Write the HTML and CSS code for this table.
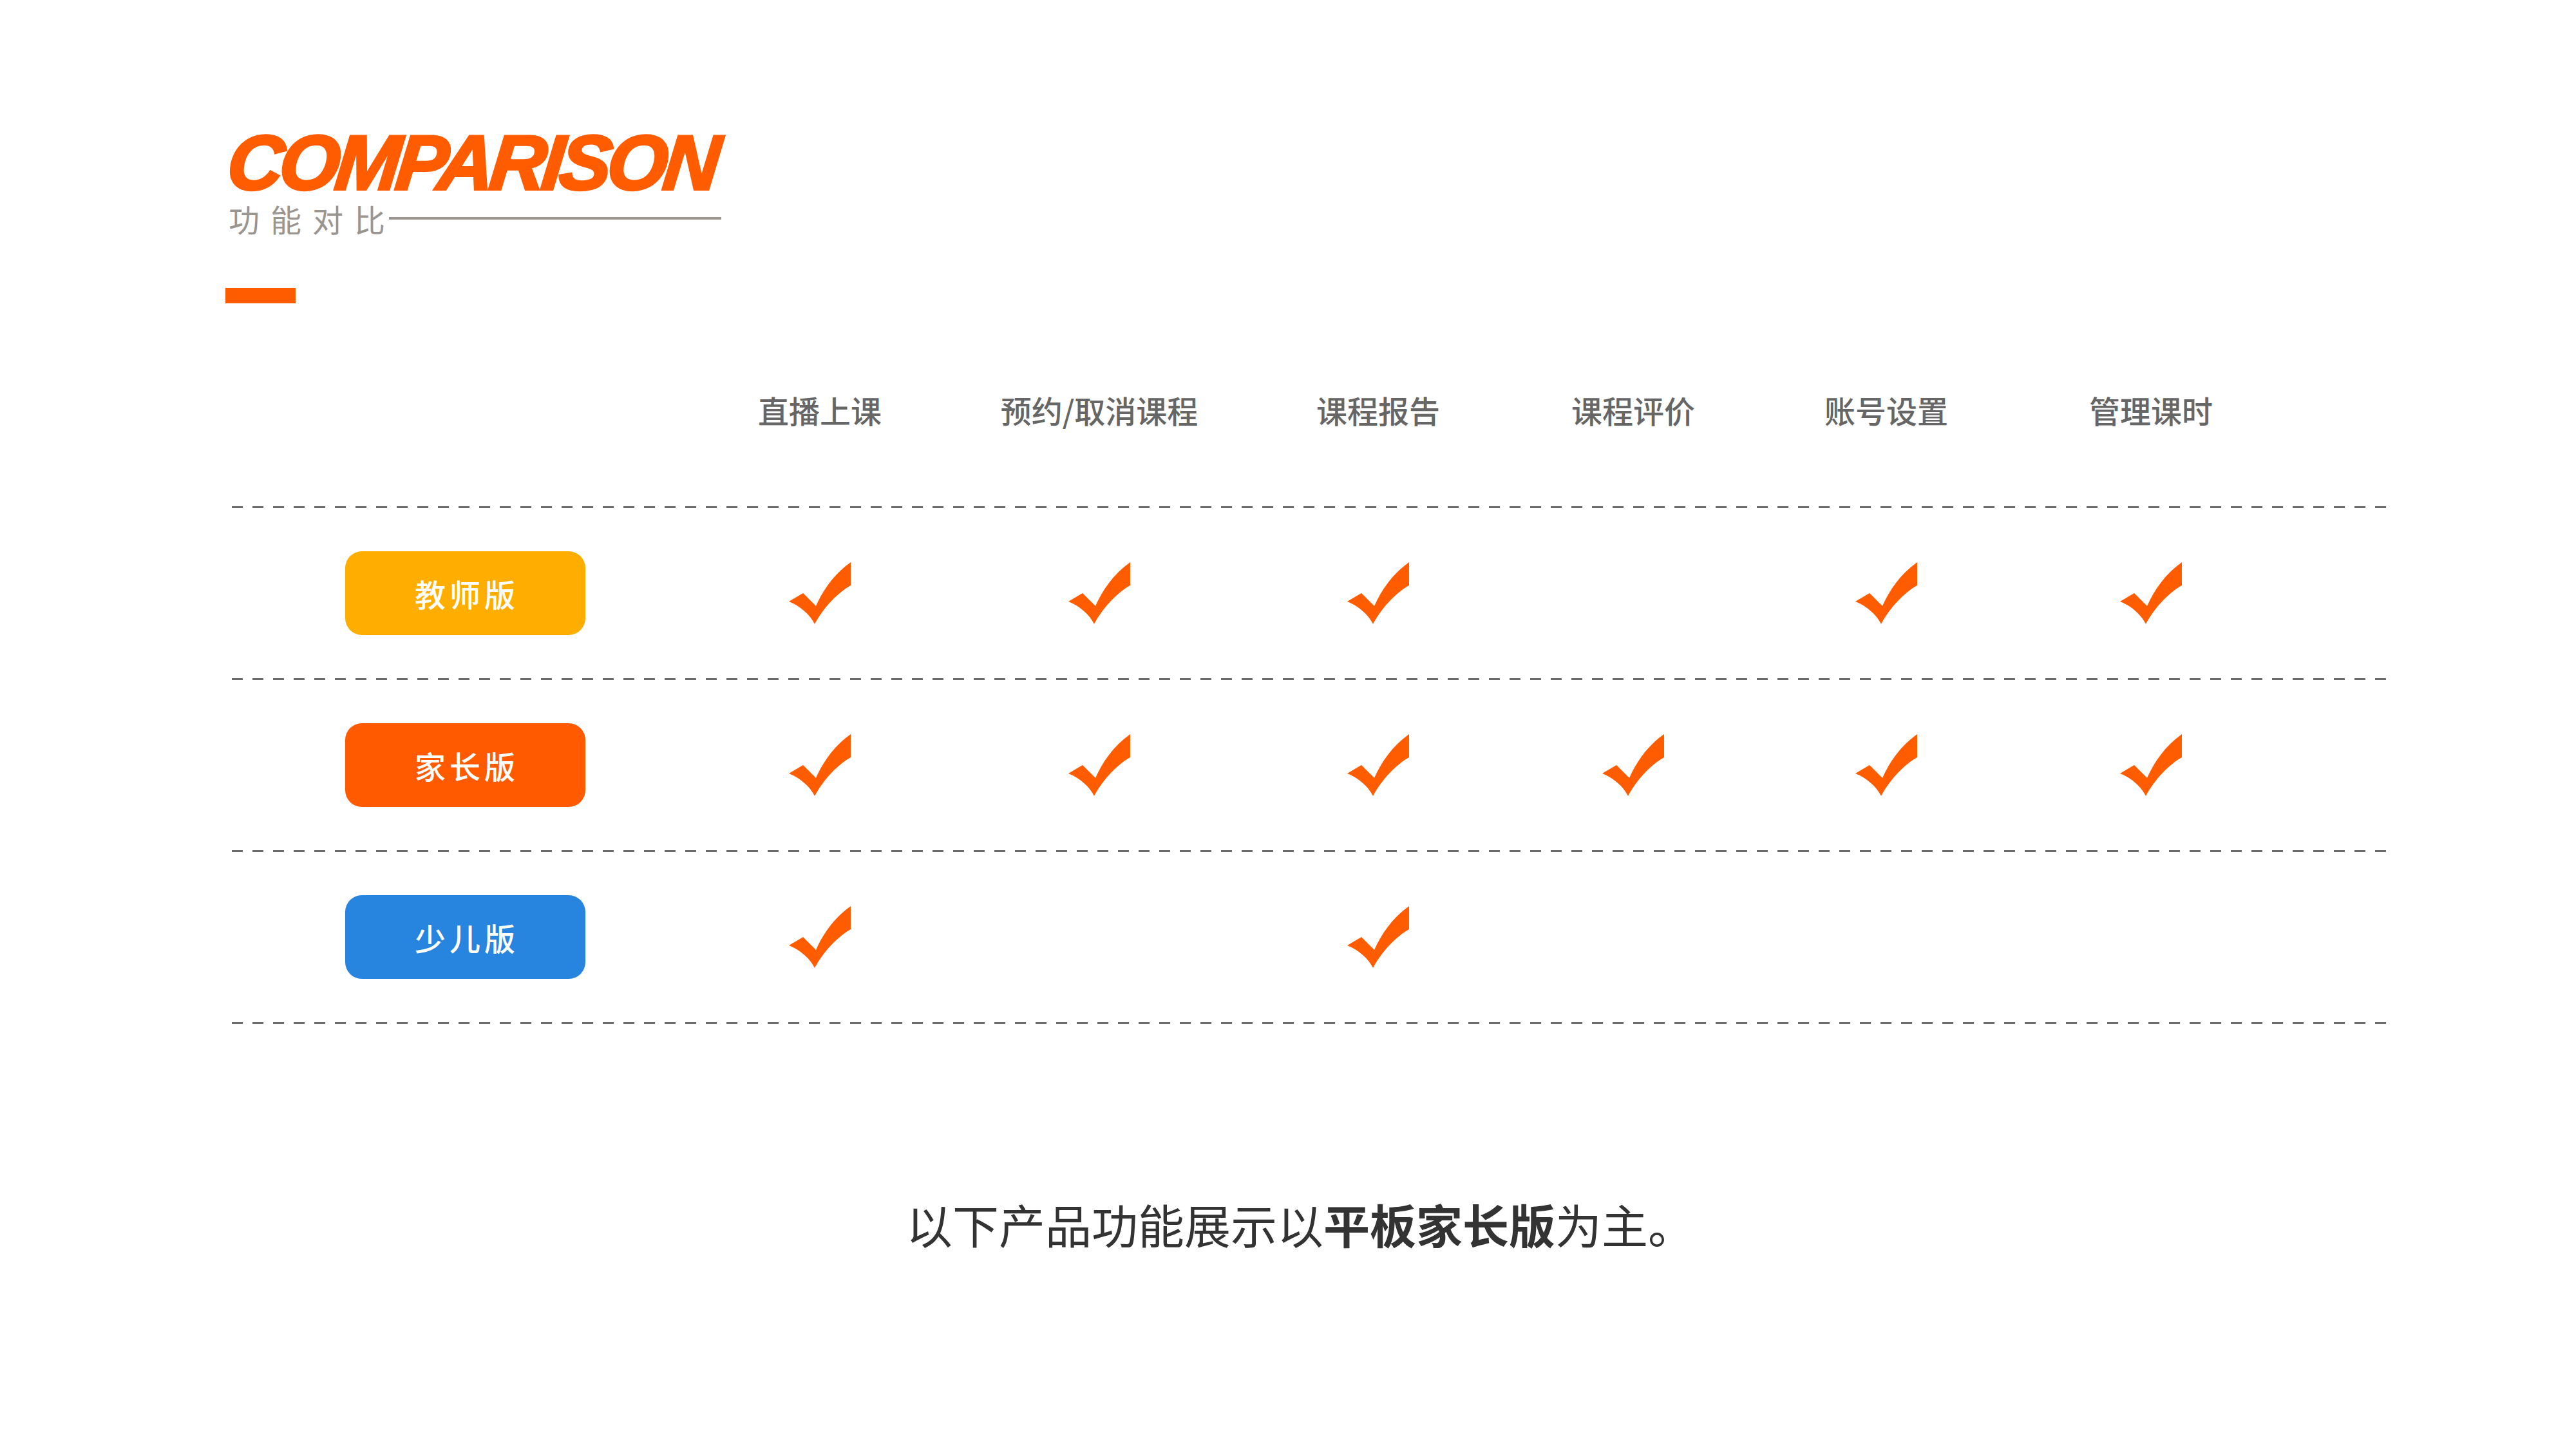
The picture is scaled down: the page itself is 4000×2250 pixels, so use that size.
FILE: index.html
```html
<!DOCTYPE html>
<html lang="zh-CN">
<head>
<meta charset="utf-8">
<title>COMPARISON 功能对比</title>
<link rel="stylesheet" href="styles.css">
</head>
<body>
<main class="page">
  <header class="brand">
    <h1 class="title">COMPARISON</h1>
    <div class="subtitle"><span class="subtitle-text">功能对比</span><i class="subtitle-rule"></i></div>
    <div class="accent"></div>
  </header>

  <section class="table">
    <div class="row head">
      <div class="cell label"></div>
      <div class="cell">直播上课</div>
      <div class="cell">预约/取消课程</div>
      <div class="cell">课程报告</div>
      <div class="cell">课程评价</div>
      <div class="cell">账号设置</div>
      <div class="cell">管理课时</div>
    </div>
    <div class="dash"></div>

    <div class="row">
      <div class="cell label"><span class="badge badge-teacher">教师版</span></div>
      <div class="cell"><svg class="check" viewBox="0 0 97 96"><path d="M0 61 L22 48 L42 68 C52 45 70 18 96 0 L96 36 C78 46 55 68 40 96 C33 82 18 68 0 61 Z"/></svg></div>
      <div class="cell"><svg class="check" viewBox="0 0 97 96"><path d="M0 61 L22 48 L42 68 C52 45 70 18 96 0 L96 36 C78 46 55 68 40 96 C33 82 18 68 0 61 Z"/></svg></div>
      <div class="cell"><svg class="check" viewBox="0 0 97 96"><path d="M0 61 L22 48 L42 68 C52 45 70 18 96 0 L96 36 C78 46 55 68 40 96 C33 82 18 68 0 61 Z"/></svg></div>
      <div class="cell"></div>
      <div class="cell"><svg class="check" viewBox="0 0 97 96"><path d="M0 61 L22 48 L42 68 C52 45 70 18 96 0 L96 36 C78 46 55 68 40 96 C33 82 18 68 0 61 Z"/></svg></div>
      <div class="cell"><svg class="check" viewBox="0 0 97 96"><path d="M0 61 L22 48 L42 68 C52 45 70 18 96 0 L96 36 C78 46 55 68 40 96 C33 82 18 68 0 61 Z"/></svg></div>
    </div>
    <div class="dash"></div>

    <div class="row">
      <div class="cell label"><span class="badge badge-parent">家长版</span></div>
      <div class="cell"><svg class="check" viewBox="0 0 97 96"><path d="M0 61 L22 48 L42 68 C52 45 70 18 96 0 L96 36 C78 46 55 68 40 96 C33 82 18 68 0 61 Z"/></svg></div>
      <div class="cell"><svg class="check" viewBox="0 0 97 96"><path d="M0 61 L22 48 L42 68 C52 45 70 18 96 0 L96 36 C78 46 55 68 40 96 C33 82 18 68 0 61 Z"/></svg></div>
      <div class="cell"><svg class="check" viewBox="0 0 97 96"><path d="M0 61 L22 48 L42 68 C52 45 70 18 96 0 L96 36 C78 46 55 68 40 96 C33 82 18 68 0 61 Z"/></svg></div>
      <div class="cell"><svg class="check" viewBox="0 0 97 96"><path d="M0 61 L22 48 L42 68 C52 45 70 18 96 0 L96 36 C78 46 55 68 40 96 C33 82 18 68 0 61 Z"/></svg></div>
      <div class="cell"><svg class="check" viewBox="0 0 97 96"><path d="M0 61 L22 48 L42 68 C52 45 70 18 96 0 L96 36 C78 46 55 68 40 96 C33 82 18 68 0 61 Z"/></svg></div>
      <div class="cell"><svg class="check" viewBox="0 0 97 96"><path d="M0 61 L22 48 L42 68 C52 45 70 18 96 0 L96 36 C78 46 55 68 40 96 C33 82 18 68 0 61 Z"/></svg></div>
    </div>
    <div class="dash"></div>

    <div class="row">
      <div class="cell label"><span class="badge badge-kids">少儿版</span></div>
      <div class="cell"><svg class="check" viewBox="0 0 97 96"><path d="M0 61 L22 48 L42 68 C52 45 70 18 96 0 L96 36 C78 46 55 68 40 96 C33 82 18 68 0 61 Z"/></svg></div>
      <div class="cell"></div>
      <div class="cell"><svg class="check" viewBox="0 0 97 96"><path d="M0 61 L22 48 L42 68 C52 45 70 18 96 0 L96 36 C78 46 55 68 40 96 C33 82 18 68 0 61 Z"/></svg></div>
      <div class="cell"></div>
      <div class="cell"></div>
      <div class="cell"></div>
    </div>
    <div class="dash"></div>
  </section>

  <p class="note">以下产品功能展示以<strong>平板家长版</strong>为主。</p>
</main>
</body>
</html>
```

FILE: styles.css
```css
html, body {
  margin: 0;
  padding: 0;
  background: #ffffff;
}

body {
  width: 4000px;
  height: 2250px;
  overflow: hidden;
  font-family: "Noto Sans CJK SC", "Noto Sans", sans-serif;
}

.page {
  box-sizing: border-box;
  width: 4000px;
  height: 2250px;
  padding: 192px 0 0 350px;
}

.brand {
  display: flex;
  flex-direction: column;
  align-items: flex-start;
}

.title {
  margin: 0;
  font-family: "Liberation Sans", Arial, sans-serif;
  font-weight: 700;
  font-style: italic;
  font-size: 120px;
  line-height: 120px;
  letter-spacing: -6px;
  color: #ff5c00;
  -webkit-text-stroke: 4px #ff5c00;
  transform: skewX(-6deg);
  transform-origin: 0 100px;
}

.subtitle {
  display: flex;
  align-items: center;
  margin-top: 3px;
  height: 48px;
}

.subtitle-text {
  font-family: "Noto Sans CJK SC", sans-serif;
  font-size: 48px;
  line-height: 48px;
  letter-spacing: 17px;
  color: #9a9590;
  padding-left: 5px;
}

.subtitle-rule {
  display: block;
  width: 516px;
  height: 4px;
  margin-left: -11px;
  background: #9b9692;
}

.accent {
  width: 109px;
  height: 24px;
  margin-top: 84px;
  background: #ff5c00;
}

.table {
  margin-left: 10px;
  width: 3350px;
}

.row {
  display: grid;
  grid-template-columns: 724px 378px 490px 376px 416px 370px 452px 1fr;
  height: 264px;
}

.row.head {
  height: 100px;
  margin-top: 115px;
  margin-bottom: 100px;
  font-size: 48px;
  line-height: 48px;
  font-weight: 500;
  color: #666666;
}

.cell {
  display: flex;
  align-items: center;
  justify-content: center;
  white-space: nowrap;
}

.dash {
  height: 3px;
  background-image: repeating-linear-gradient(to right, #6a6a6a 0 17px, transparent 17px 32px);
}

.badge {
  display: flex;
  align-items: center;
  justify-content: center;
  box-sizing: border-box;
  width: 373px;
  height: 130px;
  border-radius: 26px;
  color: #ffffff;
  font-size: 48px;
  line-height: 48px;
  font-weight: 500;
  letter-spacing: 6px;
  padding-left: 6px;
}

.badge-teacher { background: #ffae00; }
.badge-parent { background: #ff5a00; }
.badge-kids { background: #2784df; }

.check {
  display: block;
  width: 97px;
  height: 96px;
  fill: #ff5c00;
}

.note {
  margin: 274px 0 0 -6px;
  width: 3350px;
  text-align: center;
  font-size: 72px;
  line-height: 72px;
  color: #333333;
}

.note strong {
  font-weight: 700;
}
```
